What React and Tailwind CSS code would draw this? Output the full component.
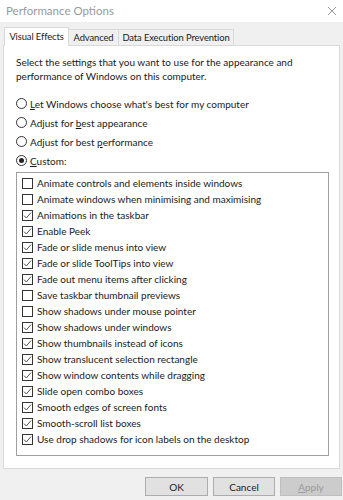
import React from "react";

const effects = [
  ["Animate controls and elements inside windows", false],
  ["Animate windows when minimising and maximising", false],
  ["Animations in the taskbar", true],
  ["Enable Peek", true],
  ["Fade or slide menus into view", true],
  ["Fade or slide ToolTips into view", true],
  ["Fade out menu items after clicking", true],
  ["Save taskbar thumbnail previews", false],
  ["Show shadows under mouse pointer", false],
  ["Show shadows under windows", true],
  ["Show thumbnails instead of icons", true],
  ["Show translucent selection rectangle", true],
  ["Show window contents while dragging", true],
  ["Slide open combo boxes", true],
  ["Smooth edges of screen fonts", true],
  ["Smooth-scroll list boxes", true],
  ["Use drop shadows for icon labels on the desktop", true],
];

function Radio({ checked, children }) {
  return (
    <div className="flex items-center h-[19px]">
      <span className="w-[11px] h-[11px] rounded-full border border-[#333] bg-white flex items-center justify-center">
        {checked && <span className="w-[5px] h-[5px] rounded-full bg-[#222]" />}
      </span>
      <span className="ml-[3px]">{children}</span>
    </div>
  );
}

function Check({ checked, label }) {
  return (
    <div className="flex items-center h-[16px]">
      <span className="w-[11px] h-[11px] border border-[#333] bg-white flex items-center justify-center">
        {checked && (
          <svg width="9" height="9" viewBox="0 0 9 9">
            <path d="M1 4.6 L3.4 7 L8 1.6" fill="none" stroke="#444" strokeWidth="0.9" />
          </svg>
        )}
      </span>
      <span className="ml-[4px]">{label}</span>
    </div>
  );
}

export default function App() {
  return (
    <div className="w-[343px] h-[500px] bg-[#f0f0f0] text-[10px] leading-[14px] text-[#1a1a1a] font-['Lato','Noto_Sans',sans-serif] overflow-hidden">
      {/* title bar */}
      <div className="h-[22px] bg-white flex items-center justify-between pl-[6px] pr-[6px]">
        <span className="text-[11.5px] text-[#9a9a9a]">Performance Options</span>
        <svg width="10" height="10" viewBox="0 0 10 10">
          <path d="M1 1 L9 9 M9 1 L1 9" stroke="#9a9a9a" strokeWidth="1" />
        </svg>
      </div>

      {/* tabs */}
      <div className="flex items-end pl-[4px] h-[23px] whitespace-nowrap text-[9.4px] tracking-[-0.1px]">
        <div className="relative z-10 w-[65px] h-[19px] mb-[-1px] bg-white border border-b-0 border-[#d9d9d9] flex items-center justify-center">
          Visual Effects
        </div>
        <div className="w-[50px] h-[16px] border border-b-0 border-l-0 border-[#d9d9d9] flex items-center justify-center">
          Advanced
        </div>
        <div className="w-[115px] h-[16px] border border-b-0 border-l-0 border-[#d9d9d9] flex items-center justify-center">
          Data Execution Prevention
        </div>
      </div>

      {/* panel */}
      <div className="ml-[3px] w-[337px] h-[424px] bg-white border border-[#d9d9d9] pl-[12px] pt-[9px]">
        <p className="w-[300px]">
          Select the settings that you want to use for the appearance and performance of Windows on this computer.
        </p>
        <div className="mt-[11px]">
          <Radio>
            <u>L</u>et Windows choose what's best for my computer
          </Radio>
          <Radio>
            Adjust for <u>b</u>est appearance
          </Radio>
          <Radio>
            Adjust for best <u>p</u>erformance
          </Radio>
          <Radio checked>
            <u>C</u>ustom:
          </Radio>
        </div>
        <div className="mt-[2px] w-[313px] h-[284px] border border-[#a0a0a0] pl-[5px] pt-[2px]">
          {effects.map(([label, checked]) => (
            <Check key={label} label={label} checked={checked} />
          ))}
        </div>
      </div>

      {/* buttons */}
      <div className="flex justify-end gap-[5px] pt-[8px] pr-[1px]">
        <button className="w-[63px] h-[19px] bg-[#e1e1e1] border border-[#adadad] text-[#1a1a1a]">
          OK
        </button>
        <button className="w-[62px] h-[19px] bg-[#e1e1e1] border border-[#adadad] text-[#1a1a1a]">
          Cancel
        </button>
        <button className="w-[62px] h-[19px] bg-[#cccccc] border border-[#bfbfbf] text-[#9a9a9a]">
          <u>A</u>pply
        </button>
      </div>
    </div>
  );
}
